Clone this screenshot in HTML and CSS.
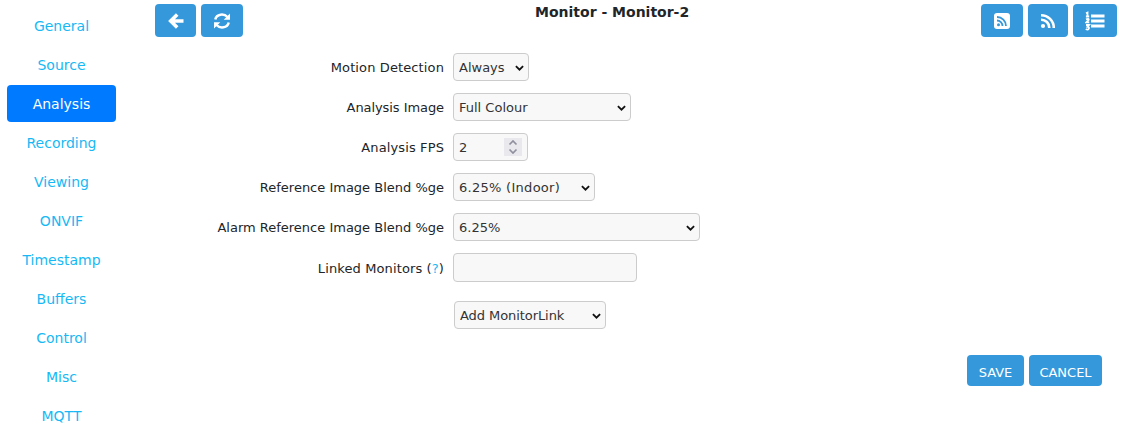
FILE: index.html
```html
<!DOCTYPE html>
<html lang="en">
<head>
<meta charset="utf-8">
<title>Monitor - Monitor-2</title>
<link rel="stylesheet" href="styles.css">
</head>
<body>
<nav class="sidebar">
  <a class="tab">General</a>
  <a class="tab">Source</a>
  <a class="tab active">Analysis</a>
  <a class="tab">Recording</a>
  <a class="tab">Viewing</a>
  <a class="tab">ONVIF</a>
  <a class="tab">Timestamp</a>
  <a class="tab">Buffers</a>
  <a class="tab">Control</a>
  <a class="tab">Misc</a>
  <a class="tab">MQTT</a>
</nav>
<main class="content">
  <header class="toolbar">
    <div class="group">
      <button class="btn back" aria-label="Back"><svg width="16" height="16" viewBox="0 0 16 16"><path d="M9.200 1.500 2.700 8l6.500 6.500M4 8h11.500" fill="none" stroke="#fff" stroke-width="3.600"/></svg></button>
      <button class="btn refresh" aria-label="Refresh"><svg width="18" height="16" viewBox="0 0 18 16"><g fill="none" stroke="#fff" stroke-width="2.500"><path d="M2.300 6.500C3.500.8 11 .2 14.500 4"/><path d="M15.700 9.500C14.500 15.200 7 15.800 3.500 12"/></g><path d="M17 .5v6.300h-6.300zM1 15.500V9.200h6.300z" fill="#fff"/></svg></button>
    </div>
    <h2 class="title">Monitor - Monitor-2</h2>
    <div class="group right">
      <button class="btn rssbox" aria-label="RTSP"><svg width="16" height="16" viewBox="0 0 16 16"><rect width="16" height="16" rx="3" fill="#fff"/><circle cx="4.500" cy="11.800" r="1.500" fill="#3498db"/><path d="M3 7.500a5.500 5.500 0 0 1 5.500 5.500M3 4a9 9 0 0 1 9 9" fill="none" stroke="#3498db" stroke-width="1.800"/></svg></button>
      <button class="btn rss" aria-label="ONVIF"><svg width="16" height="16" viewBox="0 0 16 16"><circle cx="3" cy="13" r="2.100" fill="#fff"/><path d="M1 6.700A8 8 0 0 1 9.300 15M1 2.200A12.700 12.700 0 0 1 13.800 15" fill="none" stroke="#fff" stroke-width="2.600"/></svg></button>
      <button class="btn list" aria-label="Presets"><svg width="20" height="20" viewBox="0 0 20 20"><path d="M6 5h13.500M6 10h13.500M6 15h13.500" stroke="#fff" stroke-width="2.800"/><path d="M1 2.300 2.500 1.600v4M.9 5.500h3.300M1 8.300q3-1.200 2.700.6L1.300 11.400h3M1 14h3l-1.500 1.800q2 .2 1.300 1.900T.8 18" fill="none" stroke="#fff" stroke-width="1.800"/></svg></button>
    </div>
  </header>
  <form class="form">
    <div class="row"><label class="wide">Motion Detection</label><div class="field w76"><select><option>Always</option></select><svg class="chev" viewBox="0 0 10 6"><path d="m1 .8 4 4 4-4"/></svg></div></div>
    <div class="row"><label class="tight">Analysis Image</label><div class="field w178"><select><option>Full Colour</option></select><svg class="chev" viewBox="0 0 10 6"><path d="m1 .8 4 4 4-4"/></svg></div></div>
    <div class="row"><label class="wide">Analysis FPS</label><div class="field w75"><input type="text" value="2"><span class="spin"><svg width="10" height="14" viewBox="0 0 10 14"><path d="m1.500 4.500 3.500-3.500 3.500 3.500M1.500 9.500 5 13l3.500-3.500"/></svg></span></div></div>
    <div class="row"><label>Reference Image Blend %ge</label><div class="field w142"><select class="wider"><option>6.25% (Indoor)</option></select><svg class="chev" viewBox="0 0 10 6"><path d="m1 .8 4 4 4-4"/></svg></div></div>
    <div class="row"><label>Alarm Reference Image Blend %ge</label><div class="field w247"><select><option>6.25%</option></select><svg class="chev" viewBox="0 0 10 6"><path d="m1 .8 4 4 4-4"/></svg></div></div>
    <div class="row linked"><label class="wide">Linked Monitors (<a>?</a>)</label><div class="field w184"><input type="text"></div></div>
    <div class="row extra"><label></label><div class="field w152"><select class="tight"><option>Add MonitorLink</option></select><svg class="chev" viewBox="0 0 10 6"><path d="m1 .8 4 4 4-4"/></svg></div></div>
  </form>
  <div class="actions"><button class="btn save">SAVE</button><button class="btn cancel">CANCEL</button></div>
</main>
</body>
</html>
```
FILE: styles.css
```css
* { box-sizing: border-box; }
body {
  margin: 0;
  width: 1130px;
  height: 436px;
  overflow: hidden;
  display: flex;
  background: #fff;
  color: #212529;
  font: 13px "Verdana", "DejaVu Sans", sans-serif;
}
.sidebar {
  width: 116px;
  padding: 7px 0 0 7px;
  display: flex;
  flex-direction: column;
  gap: 2px;
  flex: none;
}
.tab {
  height: 37px;
  flex: none;
  line-height: 38px;
  border-radius: 4px;
  text-align: center;
  font-size: 14px;
  color: #16b9f5;
}
.tab.active { background: #007bff; color: #fff; }
.content { flex: 1; padding: 4px 13px 0 39px; }
.toolbar { display: grid; grid-template-columns: 1fr auto 1fr; height: 33px; }
.group { display: flex; gap: 5px; }
.group.right { justify-content: flex-end; }
.title { margin: 0; font-size: 14px; line-height: 17px; font-weight: bold; width: 154px; white-space: nowrap; margin-right: 48px; }
.btn {
  border: 0;
  padding: 0;
  border-radius: 4px;
  background: #3498db;
  color: #fff;
  height: 33px;
  display: flex;
  align-items: center;
  justify-content: center;
  font: inherit;
}
.back { width: 41px; }
.refresh, .rssbox { width: 42px; }
.rss { width: 40px; }
.list { width: 44px; }
.form { display: flex; flex-direction: column; gap: 12px; padding-top: 16px; }
.row { display: flex; height: 28px; gap: 9px; }
.row label { width: 289px; line-height: 29px; text-align: right; white-space: nowrap; }
.row .wide { letter-spacing: .12px; }
.row .wider { letter-spacing: .28px; }
.row .tight { letter-spacing: -.07px; }
.row a { color: #16b9f5; }
.row.linked { height: 29px; }
.row.linked label { line-height: 31px; }
.row.extra { margin-top: 7px; padding-left: 1px; }
.field {
  position: relative;
  border: 1px solid #ccc;
  border-radius: 4px;
  background: #f8f8f8;
  display: flex;
  align-items: center;
}
.field select, .field input {
  appearance: none;
  border: 0;
  outline: 0;
  background: transparent;
  width: 100%;
  height: 26px;
  padding: 0 5px;
  font: inherit;
  color: #333;
}
.chev { position: absolute; right: 4px; top: 11px; width: 9px; height: 6px; fill: none; stroke: #111; stroke-width: 2; }
.spin { position: absolute; right: 5px; top: 4px; width: 18px; height: 18px; background: #e9e9ed; display: flex; align-items: center; justify-content: center; }
.spin svg { fill: none; stroke: #8f8f9d; stroke-width: 1.7; }
.w76 { width: 76px; }
.w178 { width: 178px; }
.w75 { width: 75px; }
.w142 { width: 142px; }
.w247 { width: 247px; }
.w184 { width: 184px; }
.w152 { width: 152px; }
.actions { display: flex; justify-content: flex-end; gap: 5px; padding: 26px 15px 0 0; }
.actions .btn { height: 31px; padding-top: 3px; }
.save { width: 57px; }
.cancel { width: 73px; }
```
